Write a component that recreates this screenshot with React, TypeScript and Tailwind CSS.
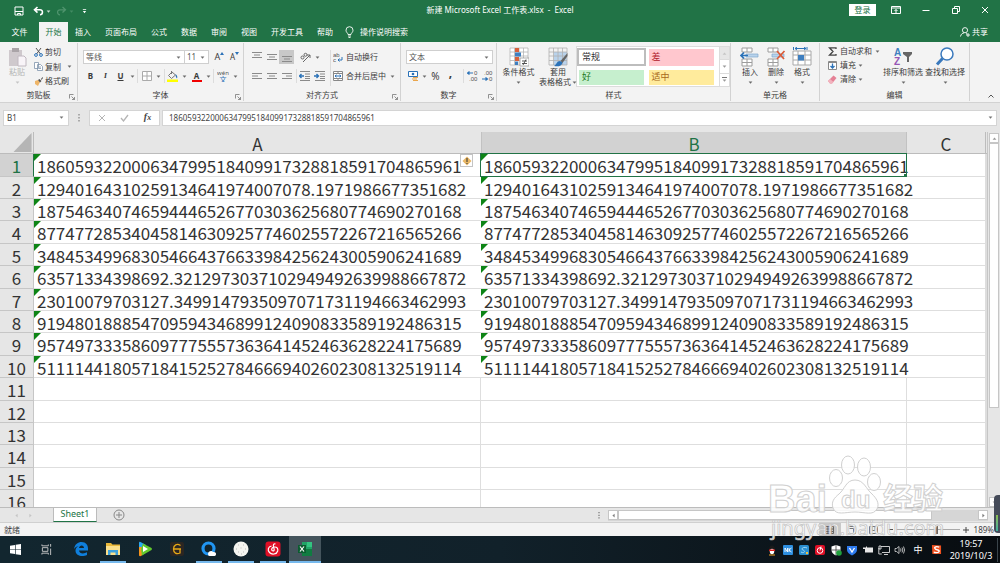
import React from "react";

type Kids = { children?: React.ReactNode };

const Caret = ({ className = "" }: { className?: string }) => (
  <svg viewBox="0 0 6 4" className={`h-[3px] w-[5px] shrink-0 opacity-75 ${className}`}>
    <path d="M0.5 0.5h5L3 3.5z" fill="currentColor" />
  </svg>
);

const Launcher = () => (
  <svg viewBox="0 0 6 6" className="h-[6px] w-[6px]" fill="none" stroke="#777" strokeWidth="0.8">
    <path d="M0.5 4.5v-4h4M2.5 2.5l3 3M5.5 3v2.5H3" />
  </svg>
);

function Group({ label, width, launcher, children }: Kids & { label: string; width: string; launcher?: boolean }) {
  return (
    <section className={`my-px flex shrink-0 flex-col border-r border-[#d2d2d2] ${width}`}>
      <div className="h-[47px] pt-px">{children}</div>
      <div className="flex h-[12px] items-center">
        <span className="w-2" />
        <span className="flex-1 text-center">{label}</span>
        <span className="flex w-2 justify-start pt-1">{launcher && <Launcher />}</span>
      </div>
    </section>
  );
}

const Rule = ({ className = "h-[14px]" }: { className?: string }) => (
  <span className={`w-px shrink-0 bg-[#dcdcdc] ${className}`} />
);

function Tool({ label, width = "w-[15px]", className = "", children }: Kids & { label: string; width?: string; className?: string }) {
  return (
    <button aria-label={label} className={`flex h-[14px] shrink-0 items-center justify-center ${width} ${className}`}>
      {children}
    </button>
  );
}

function Combo({ label, value, width }: { label: string; value: string; width: string }) {
  return (
    <div className={`flex h-[14px] items-center border border-[#cfcfcf] bg-white pr-[3px] ${width}`}>
      <select aria-label={label} className="min-w-0 flex-1 appearance-none bg-transparent pl-[2px] leading-3 text-[#555] outline-none">
        <option>{value}</option>
      </select>
      <Caret />
    </div>
  );
}

function BigButton({ lines, width, caretInline, muted, children }: Kids & { lines: string[]; width: string; caretInline?: boolean; muted?: boolean }) {
  return (
    <button className={`flex shrink-0 flex-col items-center pt-[2px] ${width} ${muted ? "text-[#b5b5b5]" : ""}`}>
      <span className="flex h-[21px] items-center">{children}</span>
      {lines.map((l, i) => (
        <span key={l} className="flex h-[10px] items-center gap-px leading-[10px]">
          {l}
          {caretInline && i === lines.length - 1 && <Caret />}
        </span>
      ))}
      {!caretInline && <span className="flex h-[10px] items-center"><Caret /></span>}
    </button>
  );
}

const Lines = ({ y, x = [1, 1, 1], w = [10, 10, 10] }: { y: number; x?: number[]; w?: number[] }) => (
  <svg viewBox="0 0 12 12" className="h-3 w-3" stroke="#8a8a8a" strokeWidth="1">
    {x.map((s, i) => (
      <path key={i} d={`M${s} ${y + i * 2.5}h${w[i]}`} />
    ))}
  </svg>
);

const Indent = ({ right }: { right?: boolean }) => (
  <svg viewBox="0 0 12 12" className="h-3 w-3" fill="none">
    <path d="M1 1.5h10M6 4h5M6 6.500h5M1 10.500h10M6 8.500h5" stroke="#8a8a8a" />
    <path d={right ? "M0 6h4M2.500 4l2 2-2 2" : "M5 6H1M2.500 4l-2 2 2 2"} stroke="#2b72b8" strokeWidth="1.400" />
  </svg>
);

const Decimals = ({ dec }: { dec?: boolean }) => (
  <svg viewBox="0 0 12 12" className="h-3 w-3" fontFamily="Liberation Sans, sans-serif" fontSize="6" fill="#555">
    <text x={dec ? 2 : 7} y="5">{dec ? ".00" : "0"}</text>
    <text x={dec ? 7 : 2} y="11">{dec ? "0" : ".00"}</text>
    <path d={dec ? "M0 9h5M3.500 7.500L5.500 9l-2 1.500" : "M6 3H1M2.500 1.500L.5 3l2 1.500"} stroke="#2b72b8" fill="none" strokeWidth="1.200" />
  </svg>
);

const gridPath = "M1 1h18v17H1zM1 5h18M1 9h18M1 13.500h18M5.500 1v17M10 1v17M14.500 1v17";

const CondIcon = () => (
  <svg viewBox="0 0 20 20" className="h-5 w-5" fill="none">
    <path d={gridPath} fill="#fff" stroke="#b5b5b5" strokeWidth="0.800" />
    <path d="M6 1h4v4H6zM6 10h4v4H6z" fill="#d8603b" />
    <path d="M6 5.500h6v4H6zM6 14.500h3V18H6z" fill="#3f7fc0" />
    <path d="M11 11h9v8h-9z" fill="#fff" stroke="#999" strokeWidth="0.800" />
    <path d="M13 14h5M13 16.500h5M17 12.500l-3 5.500" stroke="#444" strokeWidth="0.900" />
  </svg>
);
const TableIcon = () => (
  <svg viewBox="0 0 20 20" className="h-5 w-5" fill="none">
    <path d="M6 5h13v13H6z" fill="#b9d3ec" />
    <path d={gridPath} stroke="#b0b0b0" strokeWidth="0.800" />
    <path d="M19.500 6l-7 8 2 2 5-7z" fill="#666" />
    <path d="M12 14c-3 0-3 3-6 5 4 1 8 0 8.500-3.500z" fill="#2b72b8" />
  </svg>
);
const CellsIcon = ({ kind }: { kind: "in" | "del" | "fmt" }) => (
  <svg viewBox="0 0 20 20" className="h-5 w-5" fill="none">
    {kind === "fmt" ? (
      <>
        <path d="M1 4h18v14H1zM1 8h18M1 13h18M6 4v14M13 4v14" fill="#fff" stroke="#a8a8a8" />
        <path d="M6 8h6v5.500H6z" fill="#3f7fc0" />
        <path d="M1.500 0v3M15 0v3M3 1.500h11M5 0L3 1.500 5 3M12 0l2 1.500L12 3" stroke="#2b72b8" />
      </>
    ) : (
      <>
        <path d="M2 1h10v4H2zM7 1v4M2 12h10v7H2zM2 15.500h10M7 12v7" fill="#fff" stroke="#9c9c9c" />
        <path d="M6 7h12v3H6z" fill="#b9d3ec" stroke="#7ea6cc" strokeWidth="0.700" />
        {kind === "in" ? (
          <path d="M8 8.500H1M4 5.500l-3 3 3 3" stroke="#2b72b8" strokeWidth="1.700" />
        ) : (
          <path d="M11 4l7 8M18.500 4L11 12" stroke="#dc5a36" strokeWidth="1.700" />
        )}
      </>
    )}
  </svg>
);

const tabs = ["插入", "页面布局", "公式", "数据", "审阅", "视图", "开发工具", "帮助"];

function TitleBar() {
  return (
    <header className="shrink-0 bg-[#217346] text-white">
      <div className="grid h-[22px] grid-cols-[1fr_auto_1fr] items-center">
        <div className="flex items-center pl-[14px]">
          <Tool label="保存" width="w-[10px]">
            <svg viewBox="0 0 10 10" className="h-[10px] w-[10px]" fill="none" stroke="#fff">
              <path d="M1 1h8v8H1zM1 5.500h8M3.500 9V7.500h3V9" />
            </svg>
          </Tool>
          <Tool label="撤消" width="ml-[9px] w-[18px]" className="gap-[2px]">
            <svg viewBox="0 0 11 10" className="h-[10px] w-[11px]" fill="none" stroke="#fff" strokeWidth="1.600">
              <path d="M4.500 1L1.500 3.800l3 2.800M1.500 3.800H7c3.500 0 3 5 0 5" />
            </svg>
            <Caret />
          </Tool>
          <Tool label="恢复" width="ml-[5px] w-[18px]" className="gap-[2px] text-[#4f946d]">
            <svg viewBox="0 0 11 10" className="h-[10px] w-[11px]" fill="none" stroke="currentColor" strokeWidth="1.300">
              <path d="M6.500 1l3 2.800-3 2.800M9.500 3.800H4c-3.500 0-3 5 0 5" />
            </svg>
            <Caret />
          </Tool>
          <Tool label="自定义快速访问工具栏" width="ml-[5px] w-[10px]">
            <svg viewBox="0 0 6 6" className="h-[5px] w-[5px]" fill="#fff"><path d="M1 0h4v1H1zM1 2.500h4L3 5z" /></svg>
          </Tool>
        </div>
        <h1 className="pb-[2px]">新建 Microsoft Excel 工作表.xlsx&nbsp; -&nbsp; Excel</h1>
        <div className="flex items-center justify-end pb-[2px]">
          <button className="h-3 w-[27px] bg-white leading-3 text-[#217346]">登录</button>
          <Tool label="功能区显示选项" width="ml-[11px] w-[18px]">
            <svg viewBox="0 0 10 8" className="h-2 w-[10px]" fill="none" stroke="#fff"><path d="M.5.5h9v7h-9zM.5 2h9M5 7V3.500M3.500 5L5 3.500 6.500 5" /></svg>
          </Tool>
          <Tool label="最小化" width="ml-[12px] w-[18px]">
            <svg viewBox="0 0 8 8" className="h-2 w-2" stroke="#fff"><path d="M.5 4.500h7" /></svg>
          </Tool>
          <Tool label="还原" width="ml-[12px] w-[18px]">
            <svg viewBox="0 0 8 8" className="h-2 w-2" fill="none" stroke="#fff"><path d="M.5 2.500h5v5h-5zM2.500 2V.5h5v5H6" /></svg>
          </Tool>
          <Tool label="关闭" width="mr-[6px] ml-[11px] w-[18px]">
            <svg viewBox="0 0 8 8" className="h-2 w-2" fill="none" stroke="#fff"><path d="M1 1l6 6M7 1L1 7" /></svg>
          </Tool>
        </div>
      </div>
      <nav className="flex h-5 items-stretch">
        <button className="w-[39px]">文件</button>
        <button className="w-[29px] bg-[#f3f3f3] text-[#217346]">开始</button>
        {tabs.map((t) => (
          <button key={t} className="px-[7px]">{t}</button>
        ))}
        <button className="flex items-center gap-[6px] pl-[5px]">
          <svg viewBox="0 0 9 12" className="h-3 w-[9px]" fill="none" stroke="#fff" strokeWidth="0.900">
            <path d="M3 8.500C3 7 1 6.500 1 4.200a3.500 3.500 0 017 0C8 6.500 6 7 6 8.500zM3 10h3M3.500 11.500h2" />
          </svg>
          操作说明搜索
        </button>
        <button className="mr-3 ml-auto flex items-center gap-[2px]">
          <svg viewBox="0 0 10 10" className="h-[10px] w-[10px]" fill="none" stroke="#fff" strokeWidth="0.900">
            <circle cx="5" cy="3.200" r="2.600" /><path d="M.5 9.500C1 7 2.500 6 4 6M6 6.500l1 .5M8 6v4M6 8h4" />
          </svg>
          共享
        </button>
      </nav>
    </header>
  );
}

function Ribbon() {
  return (
    <div className="flex h-[61px] shrink-0 overflow-hidden border-b border-[#d2d2d2] bg-[#f3f3f3] text-[#3b3b3b]">
      <Group label="剪贴板" width="w-[78px]" launcher>
        <div className="flex h-full">
          <BigButton lines={["粘贴"]} width="w-[34px]" muted>
            <svg viewBox="0 0 20 20" className="h-5 w-5">
              <path d="M2 3h13v16H2z" fill="#cfc9cd" /><path d="M5 1h7v4H5z" fill="#aaa4a8" />
              <path d="M11 9h6l2 2v8h-8z" fill="#f8f4f8" stroke="#c0b8c0" />
            </svg>
          </BigButton>
          <div className="flex flex-col pt-px">
            <button className="flex h-[14px] items-center gap-[2px]">
              <svg viewBox="0 0 9 9" className="h-[9px] w-[9px]" fill="none">
                <path d="M2 0l4.500 6M7 0L2.500 6" stroke="#555" /><circle cx="2" cy="7" r="1.400" stroke="#2b72b8" /><circle cx="7" cy="7" r="1.400" stroke="#2b72b8" />
              </svg>
              剪切
            </button>
            <button className="flex h-[15px] items-center gap-[2px]">
              <svg viewBox="0 0 9 9" className="h-[9px] w-[9px]" fill="#fff" stroke="#7d93ab" strokeWidth="0.800">
                <path d="M.5.5h4v6h-4zM3.500 2.500h3l2 2v4h-5zM5 5h2M5 6.500h2" />
              </svg>
              复制
              <Caret className="ml-1" />
            </button>
            <button className="flex h-[14px] items-center gap-[2px]">
              <svg viewBox="0 0 9 9" className="h-[9px] w-[9px]">
                <path d="M1 4l3-1 2 2-2 4-3-2z" fill="#eeb568" /><path d="M4 3l1.500-1 2 2L6 5.500zM7 2l1.500-2L9 1 7.500 3z" fill="#555" />
              </svg>
              格式刷
            </button>
          </div>
        </div>
      </Group>

      <Group label="字体" width="w-[166px]" launcher>
        <div className="flex flex-col gap-[5px] pt-[6px] pl-[5px]">
          <div className="flex">
            <Combo label="字体" value="等线" width="w-[102px]" />
            <Combo label="字号" value="11" width="-ml-px w-[25px]" />
            <Tool label="增大字号" width="ml-[3px] w-[15px]" className="text-[9px]">A<svg viewBox="0 0 4 3" className="mb-2 h-[3px] w-1" fill="#2b72b8"><path d="M2 0l2 3H0z" /></svg></Tool>
            <Tool label="减小字号" className="text-[8px]">A<svg viewBox="0 0 4 3" className="mb-2 h-[3px] w-1" fill="#2b72b8"><path d="M2 3l2-3H0z" /></svg></Tool>
          </div>
          <div className="flex items-center">
            <Tool label="加粗"><b>B</b></Tool>
            <Tool label="倾斜"><i className="font-serif font-bold">I</i></Tool>
            <Tool label="下划线"><u className="font-bold">U</u></Tool>
            <Tool label="下划线选项" width="w-[9px]"><Caret /></Tool>
            <Rule />
            <Tool label="边框" width="w-[26px]" className="gap-1">
              <svg viewBox="0 0 10 10" className="h-[10px] w-[10px]" fill="#fff" stroke="#aaa"><path d="M.5.5h9v9h-9zM5 0v10M0 5h10" /></svg>
              <Caret />
            </Tool>
            <Rule />
            <Tool label="填充颜色" width="w-[24px]" className="gap-1">
              <svg viewBox="0 0 11 11" className="h-[11px] w-[11px]" fill="none">
                <path d="M5 1L1.500 4.500 4.500 7.500l4-3.500zM4.500 0v3" stroke="#777" /><path d="M8.500 3c2 1.500 2 3 1.500 4.500-1-1-1.500-2-1.500-4.500z" fill="#2b72b8" /><path d="M0 8.500h11V11H0z" fill="#ff0" />
              </svg>
              <Caret />
            </Tool>
            <Tool label="字体颜色" width="w-[24px]" className="gap-1">
              <span className="w-[10px] border-b-2 border-[#f00000] text-center leading-[9px] font-bold">A</span>
              <Caret />
            </Tool>
            <Rule />
            <Tool label="拼音" width="w-[26px]" className="gap-1">
              <svg viewBox="0 0 12 12" className="h-3 w-3" textAnchor="middle">
                <text x="6" y="4.500" fontSize="6" fill="#555">wén</text>
                <text x="6" y="11.500" fontSize="7" fill="#2b72b8">文</text>
              </svg>
              <Caret />
            </Tool>
          </div>
        </div>
      </Group>

      <Group label="对齐方式" width="w-[157px]" launcher>
        <div className="flex pt-[6px] pl-[5px]">
          <div className="flex flex-col gap-[5px]">
            <div className="flex items-center">
              <Tool label="顶端对齐"><Lines y={1.500} x={[1, 3, 1]} w={[10, 6, 10]} /></Tool>
              <Tool label="垂直居中"><Lines y={3.500} x={[1, 3, 1]} w={[10, 6, 10]} /></Tool>
              <Tool label="底端对齐" className="bg-[#c8c8c8]"><Lines y={5.500} x={[1, 3, 1]} w={[10, 6, 10]} /></Tool>
              <Tool label="方向" width="ml-1 w-[24px]" className="gap-1">
                <svg viewBox="0 0 11 11" className="h-[11px] w-[11px]" fill="none" stroke="#666"><path d="M3 10l7-7M7 3h3v3" /><circle cx="2.500" cy="5.500" r="1.500" /><circle cx="5.500" cy="2.800" r="1.500" /></svg>
                <Caret />
              </Tool>
            </div>
            <div className="flex items-center">
              <Tool label="左对齐"><Lines y={3.500} w={[10, 6, 10]} /></Tool>
              <Tool label="居中"><Lines y={3.500} x={[1, 3, 1]} w={[10, 6, 10]} /></Tool>
              <Tool label="右对齐"><Lines y={3.500} x={[1, 5, 1]} w={[10, 6, 10]} /></Tool>
              <Rule className="ml-[2px] h-[14px]" />
              <Tool label="减少缩进量"><Indent /></Tool>
              <Tool label="增加缩进量"><Indent right /></Tool>
            </div>
          </div>
          <Rule className="mr-[2px] ml-[3px] h-[36px]" />
          <div className="flex flex-col gap-[5px]">
            <button className="flex h-[14px] items-center gap-[3px]">
              <svg viewBox="0 0 10 10" className="h-[10px] w-[10px]" fill="#555" fontSize="6" fontFamily="Liberation Sans, sans-serif"><text x="0" y="4.500">ab</text><text x="0" y="9.500">c</text><path d="M9 5v3H5M6.500 6.500L5 8l1.500 1.500" fill="none" stroke="#2b72b8" /></svg>
              自动换行
            </button>
            <button className="flex h-[14px] items-center gap-[3px]">
              <svg viewBox="0 0 10 10" className="h-[10px] w-[10px]" fill="#fff" stroke="#888"><path d="M.5.5h9v9h-9zM.5 2.500h9M.5 7.500h9M5 .5v2M5 7.500v2" /><path d="M2 5h6M3.500 3.800L2 5l1.500 1.200M6.500 3.800L8 5 6.500 6.200" stroke="#2b72b8" fill="none" /></svg>
              合并后居中
              <Caret className="ml-px" />
            </button>
          </div>
        </div>
      </Group>

      <Group label="数字" width="w-[96px]" launcher>
        <div className="flex flex-col gap-[5px] pt-[6px] pl-[5px]">
          <Combo label="数字格式" value="文本" width="w-[87px]" />
          <div className="flex items-center">
            <Tool label="会计数字格式" width="w-[22px]" className="gap-[3px]">
              <svg viewBox="0 0 11 10" className="h-[10px] w-[11px]"><path d="M.5.5h9v5h-9z" fill="#fff" stroke="#2b72b8" /><circle cx="5" cy="3" r="1.300" fill="#2b72b8" /><path d="M5 6h5v1H5zM4 7.500h5v1H4zM5 9h5v1H5z" fill="#eaa64d" /></svg>
              <Caret />
            </Tool>
            <Tool label="百分比样式" className="text-[10px]">%</Tool>
            <Tool label="千位分隔样式" className="text-[12px] font-bold"><span className="mb-[6px]">,</span></Tool>
            <Rule className="mr-px ml-[5px] h-[14px]" />
            <Tool label="增加小数位数"><Decimals /></Tool>
            <Tool label="减少小数位数"><Decimals dec /></Tool>
          </div>
        </div>
      </Group>

      <Group label="样式" width="w-[234px]">
        <div className="flex h-full">
          <BigButton lines={["条件格式"]} width="w-[43px]"><CondIcon /></BigButton>
          <BigButton lines={["套用", "表格格式"]} width="w-[36px]" caretInline><TableIcon /></BigButton>
          <div className="mt-[2px] flex h-[41px] border border-[#dcdcdc] bg-white text-[9px]">
            <div className="grid grid-cols-2 gap-x-[3px] gap-y-[3px] py-px pr-[2px]">
              <button className="h-[18px] w-[69px] border-2 border-[#bdbdbd] pl-[3px] text-left text-[#333]">常规</button>
              <button className="my-px w-[65px] bg-[#ffc7ce] pl-[3px] text-left text-[#b0202c]">差</button>
              <button className="mx-[2px] h-[15px] bg-[#c6efce] pl-[3px] text-left text-[#1d7a1d]">好</button>
              <button className="h-[15px] w-[65px] bg-[#ffeb9c] pl-[3px] text-left text-[#a8691a]">适中</button>
            </div>
            <div className="flex w-[10px] flex-col divide-y divide-[#dcdcdc] border-l border-[#dcdcdc] text-[#777]">
              <button aria-label="上一行" className="flex flex-1 items-center justify-center bg-[#e6e6e6]"><Caret className="rotate-180 text-[#bbb]" /></button>
              <button aria-label="下一行" className="flex flex-1 items-center justify-center"><Caret /></button>
              <button aria-label="其他" className="flex flex-1 flex-col items-center justify-center gap-px"><span className="h-px w-[5px] bg-[#777]" /><Caret /></button>
            </div>
          </div>
        </div>
      </Group>

      <Group label="单元格" width="w-[89px]">
        <div className="flex h-full pl-[6px]">
          <BigButton lines={["插入"]} width="w-[26px]"><CellsIcon kind="in" /></BigButton>
          <BigButton lines={["删除"]} width="w-[26px]"><CellsIcon kind="del" /></BigButton>
          <BigButton lines={["格式"]} width="w-[26px]"><CellsIcon kind="fmt" /></BigButton>
        </div>
      </Group>

      <Group label="编辑" width="w-[150px]">
        <div className="flex h-full pl-2">
          <div className="flex w-[54px] flex-col">
            <button className="flex h-[14px] items-center gap-[3px]">
              <svg viewBox="0 0 9 9" className="h-[9px] w-[9px] shrink-0" fill="none" stroke="#444" strokeWidth="1.300"><path d="M8 2V.8H1.500L5 4.500 1.500 8.200H8V7" /></svg>
              自动求和
              <Caret />
            </button>
            <button className="flex h-[14px] items-center gap-[3px]">
              <svg viewBox="0 0 9 9" className="h-[9px] w-[9px]" fill="#fff" stroke="#888"><path d="M.5.5h8v8h-8zM.5 1.500h8" /><path d="M4.500 2.500V7M2.500 5l2 2 2-2" fill="none" stroke="#2b72b8" strokeWidth="1.300" /></svg>
              <span className="flex items-center gap-[2px]">填充<Caret /></span>
            </button>
            <button className="flex h-[14px] items-center gap-[3px]">
              <svg viewBox="0 0 9 9" className="h-[9px] w-[9px]"><path d="M0 6l5.500-5.500 3 2.500L4 8.500H2z" fill="#e58196" /><path d="M0 6l2-2 3.500 3L4 8.500H2z" fill="#f2b3be" /></svg>
              <span className="flex items-center gap-[2px]">清除<Caret /></span>
            </button>
          </div>
          <BigButton lines={["排序和筛选"]} width="w-[42px]">
            <svg viewBox="0 0 20 20" className="h-5 w-5" fontFamily="Liberation Sans, sans-serif" fontSize="10" fontWeight="bold">
              <text x="1" y="9" fill="#3f7fc0">A</text><text x="1" y="18" fill="#9655b5">Z</text>
              <path d="M10 5h9v2l-3 3v5h-2v-5l-4-3z" fill="#666" />
            </svg>
          </BigButton>
          <BigButton lines={["查找和选择"]} width="w-[42px]">
            <svg viewBox="0 0 20 20" className="h-5 w-5" fill="none" stroke="#3a79bd"><circle cx="12" cy="7" r="6" fill="#fff" strokeWidth="1.500" /><path d="M7.500 11.500L2 17.500" strokeWidth="3" /></svg>
          </BigButton>
        </div>
      </Group>
      <button aria-label="折叠功能区" className="mt-auto mr-[6px] mb-1 ml-auto">
        <svg viewBox="0 0 6 4" className="h-1 w-[6px]" fill="none" stroke="#555"><path d="M.5 3.500L3 1l2.500 2.500" /></svg>
      </button>
    </div>
  );
}

function FormulaBar() {
  return (
    <div className="flex h-[29px] shrink-0 items-center bg-[#e6e6e6] pr-[3px] text-[#444]">
      <div className="ml-[3px] flex h-4 w-[66px] items-center border border-[#d4d4d4] bg-white pr-1">
        <input aria-label="名称框" defaultValue="B1" className="min-w-0 flex-1 bg-transparent pl-[3px] outline-none" />
        <Caret />
      </div>
      <svg viewBox="0 0 2 8" className="mx-[9px] h-2 w-[2px] fill-[#aaa]"><path d="M0 0h2v1.500H0zM0 3h2v1.500H0zM0 6h2v1.500H0z" /></svg>
      <div className="flex h-4 w-[71px] items-center justify-around border border-[#d4d4d4] bg-white">
        <Tool label="取消"><svg viewBox="0 0 8 8" className="h-2 w-2" stroke="#b5b5b5"><path d="M1 1l6 6M7 1L1 7" /></svg></Tool>
        <Tool label="输入"><svg viewBox="0 0 9 8" className="h-2 w-[9px]" fill="none" stroke="#b5b5b5" strokeWidth="1.300"><path d="M1 4l2.500 3L8 1" /></svg></Tool>
        <Tool label="插入函数"><i className="font-['Liberation_Serif',serif] text-[10px] font-bold">f<span className="text-[8px]">x</span></i></Tool>
      </div>
      <div className="ml-[2px] flex h-4 flex-1 items-center border border-[#d4d4d4] bg-white pr-[3px]">
        <input aria-label="编辑栏" defaultValue={values[0]} className="min-w-0 flex-1 bg-transparent pl-[6px] outline-none" />
        <Caret />
      </div>
    </div>
  );
}

const values = [
  "186059322000634799518409917328818591704865961",
  "12940164310259134641974007078.1971986677351682",
  "187546340746594446526770303625680774690270168",
  "877477285340458146309257746025572267216565266",
  "348453499683054664376633984256243005906241689",
  "63571334398692.3212973037102949492639988667872",
  "23010079703127.3499147935097071731194663462993",
  "919480188854709594346899124090833589192486315",
  "957497333586097775557363641452463628224175689",
  "511114418057184152527846669402602308132519114",
];
const rowHeights = ["h-[23px]", "h-[22px]", "h-[22px]", "h-[23px]", "h-[22px]"];

function Cell({ value, selected, warn }: { value?: string; selected?: boolean; warn?: boolean }) {
  return (
    <td className={`relative border-b border-[#dedede] p-0 pt-[2px] pl-[3px] ${value ? "" : "border-r"}`}>
      {value && (
        <svg viewBox="0 0 7 7" className="absolute top-0 left-0 h-[7px] w-[7px]"><path d="M0 0h7L0 7z" fill="#0d8415" /></svg>
      )}
      {value}
      {selected && (
        <span className="pointer-events-none absolute -top-px right-0 -bottom-px -left-px border border-[#217346]">
          <span className="absolute -right-px -bottom-px h-[3px] w-[3px] bg-[#217346]" />
        </span>
      )}
      {warn && (
        <button aria-label="错误检查选项" className="absolute top-0 right-2 flex h-[13px] w-[13px] items-center justify-center border border-[#c4c4c4] bg-white">
          <svg viewBox="0 0 10 10" className="h-[10px] w-[10px]"><path d="M5 .5L9.500 5 5 9.500.5 5z" fill="#e9b765" /><path d="M4.500 2h1v4h-1zM4.500 7h1v1h-1z" fill="#333" /></svg>
        </button>
      )}
    </td>
  );
}

function Sheet() {
  return (
    <div className="flex min-h-0 flex-1 bg-[#e6e6e6]">
      <div className="min-w-0 flex-1 overflow-hidden bg-white">
        <table className="w-full table-fixed border-separate border-spacing-0 font-['Noto_Sans_CJK_SC',sans-serif] text-[17px] leading-[18px] font-normal text-[#333]">
          <colgroup>
            <col className="w-[34px]" /><col className="w-[447px]" /><col className="w-[426px]" /><col className="w-[79px]" /><col />
          </colgroup>
          <thead>
            <tr className="h-[22px] bg-[#e6e6e6]">
              <td className="border-r border-b border-[#bcbcbc] p-0">
                <svg viewBox="0 0 20 20" className="ml-auto h-[19px] w-5"><path d="M19 0v20H0z" fill="#b5b5b5" /></svg>
              </td>
              <th className="border-b border-[#bcbcbc] p-0 pt-[2px] font-normal">A</th>
              <th className="border-x border-b border-[#c2c2c2] border-b-[#217346] bg-[#d2d2d2] p-0 pt-[2px] font-normal text-[#217346]">B</th>
              <th className="border-r border-b border-[#bcbcbc] p-0 pt-[2px] font-normal">C</th>
              <th className="border-b border-[#bcbcbc] p-0"></th>
            </tr>
          </thead>
          <tbody>
            {Array.from({ length: 16 }, (_, i) => (
              <tr key={i} className={rowHeights[i % 5]}>
                <th className={`border-r border-b border-[#c6c6c6] p-0 pt-[2px] font-normal ${i === 0 ? "border-r-[#217346] bg-[#d2d2d2] text-[#217346]" : "bg-[#e6e6e6]"}`}>{i + 1}</th>
                <Cell value={values[i]} warn={i === 0} />
                <Cell value={values[i]} selected={i === 0} />
                <Cell />
                <Cell />
              </tr>
            ))}
          </tbody>
        </table>
      </div>
      <div className="flex w-[13px] shrink-0 flex-col items-center border-l border-[#c6c6c6] pt-[1px]">
        <button aria-label="向上滚动" className="flex h-[10px] w-[10px] items-center justify-center border border-[#c6c6c6] bg-white"><Caret className="rotate-180 text-[#777]" /></button>
        <div className="h-[265px] w-[10px] border border-[#c6c6c6] bg-white" />
        <button aria-label="向下滚动" className="mt-auto flex h-[10px] w-[10px] items-center justify-center border border-[#c6c6c6] bg-white"><Caret className="text-[#777]" /></button>
      </div>
    </div>
  );
}

function SheetTabs() {
  return (
    <div className="flex h-[15px] shrink-0 items-center border-t border-[#bcbcbc] bg-[#e6e6e6] text-[#bbb]">
      <button aria-label="上一张工作表" className="ml-[14px] w-[14px]"><Caret className="rotate-90" /></button>
      <button aria-label="下一张工作表" className="w-[25px]"><Caret className="-rotate-90" /></button>
      <button className="-mt-px h-[14px] w-[44px] border-x border-b border-x-[#bcbcbc] border-b-[#217346] bg-white text-[9px] leading-[12px] text-[#217346]">Sheet1</button>
      <button aria-label="新工作表" className="ml-4">
        <svg viewBox="0 0 12 12" className="h-3 w-3" fill="none" stroke="#888"><circle cx="6" cy="6" r="5" /><path d="M6 3v6M3 6h6" /></svg>
      </button>
      <svg viewBox="0 0 2 8" className="mr-2 ml-auto h-[7px] w-[2px] fill-[#999]"><path d="M0 0h2v1.500H0zM0 3h2v1.500H0zM0 6h2v1.500H0z" /></svg>
      <div className="mr-3 flex h-[11px] w-[380px] items-center bg-[#d6d6d6]">
        <button aria-label="向左滚动" className="flex h-[10px] w-[10px] items-center justify-center border border-[#c6c6c6] bg-white"><Caret className="rotate-90 text-[#555]" /></button>
        <div className="h-[10px] w-[314px] border border-[#c6c6c6] bg-white" />
        <button aria-label="向右滚动" className="ml-auto flex h-[10px] w-[10px] items-center justify-center border border-[#c6c6c6] bg-white"><Caret className="-rotate-90 text-[#555]" /></button>
      </div>
    </div>
  );
}

function StatusBar() {
  return (
    <div className="flex h-[14px] shrink-0 items-center border-t border-[#d0d0d0] bg-[#f3f3f3] pr-[6px] pl-1 text-[#444]">
      <span>就绪</span>
      <div className="ml-auto flex items-center">
        <Tool label="普通" width="w-[22px]" className="bg-[#c8c8c8]"><svg viewBox="0 0 9 8" className="h-2 w-[9px]" fill="none" stroke="#666"><path d="M.5.5h8v7h-8zM.5 3h8M.5 5.500h8M3 .5v7M6 .5v7" /></svg></Tool>
        <Tool label="页面布局" width="w-[22px]"><svg viewBox="0 0 9 8" className="h-2 w-[9px]" fill="none" stroke="#777"><path d="M.5.5h8v7h-8zM2.500 2.500h4v5" /></svg></Tool>
        <Tool label="分页预览" width="w-[22px]"><svg viewBox="0 0 9 8" className="h-2 w-[9px]" fill="none" stroke="#777"><path d="M.5.5h8v7h-8zM3 .5v4h3v-4" /></svg></Tool>
        <Tool label="缩小" width="w-[11px]"><span className="h-px w-[5px] bg-[#555]" /></Tool>
        <input aria-label="显示比例" type="range" min={10} max={400} defaultValue={265} className="h-[10px] w-[64px] appearance-none bg-[linear-gradient(#aaa,#aaa)] bg-[length:100%_1px] bg-center bg-no-repeat [&::-webkit-slider-thumb]:h-2 [&::-webkit-slider-thumb]:w-[3px] [&::-webkit-slider-thumb]:appearance-none [&::-webkit-slider-thumb]:bg-[#666]" />
        <Tool label="放大" width="w-[12px]"><svg viewBox="0 0 6 6" className="h-[6px] w-[6px]" stroke="#444"><path d="M0 3h6M3 0v6" /></svg></Tool>
        <span className="pl-[2px]">189%</span>
      </div>
    </div>
  );
}

const apps: { name: string; open?: boolean; active?: boolean; art: React.ReactNode }[] = [
  { name: "Edge", art: <path d="M1 8C2 3 5 1 8.500 1 13 1 15 4 15 7.500V9.500H6c.3 3.500 5 3.500 8 1.800V14C10 16 2.500 15.500 2.500 9.500 2.500 7.500 4 5.800 5.500 5 3.500 5.300 2 6.500 1 8zm5-1h5c0-3.500-4.500-3.500-5 0z" fill="#0f7fdc" /> },
  { name: "文件资源管理器", open: true, art: <><path d="M1 2h5l1.500 1.500H15V14H1z" fill="#e9b83a" /><path d="M1 5h14v9H1z" fill="#fbe08b" /><path d="M3 9h10v5h-2.500v-2.500h-5V14H3z" fill="#3ba0dc" /></> },
  { name: "腾讯视频", art: <><path d="M2 1.500Q2 .5 3.500 1L9 4 5 8 2 10z" fill="#2aa8f0" /><path d="M2 6v8.500q.5 1 2 .5l5-3.500L6 6z" fill="#f7941d" /><path d="M6 2.500l8.500 4.500q1 1 0 2L5 14.500 4 8z" fill="#63c92e" /><path d="M6 5l5 3-5 3z" fill="#fff" /></> },
  { name: "GeForce", art: <><rect x="1" y="1" width="14" height="14" rx="2" fill="#2c2622" /><path d="M11.500 4.500C8 2 4.500 4 4.500 8s3 5.500 6.500 4V8H8M5 8h7" fill="none" stroke="#e6a817" strokeWidth="1.300" /></> },
  { name: "QQ浏览器", open: true, art: <><circle cx="7.500" cy="7.500" r="5.500" fill="none" stroke="#2196f3" strokeWidth="3.200" /><path d="M7 13c0-3 4-4 5-2 2-.5 3.500 1 3 2.500-.3 1-1 1.500-2 1.500H8.500Q7 15 7 13z" fill="#fff" /></> },
  { name: "随机数", open: true, art: <><circle cx="8" cy="8" r="7.500" fill="#f5f5f0" /><path d="M5 4h1M10 4h1M3 8h1M7.500 7h1M12 8h1M5 11h1M10 11h1M8 13h1" stroke="#bbb" /></> },
  { name: "网易云音乐", open: true, art: <><rect x=".5" y=".5" width="15" height="15" rx="3" fill="#e00f26" /><path d="M10.500 3C8.500 2.500 8 4 8.500 5.500l.7 3c.3 1.800-2.500 2-2.500 0 0-1.500 1-2.500 3-2.500 2.500 0 3.500 1.800 3 4-1 3.500-6 4-8.200 1.500S3 5.800 6.500 5" fill="none" stroke="#fff" strokeWidth="1.200" /></> },
  { name: "Excel", open: true, active: true, art: <><path d="M5 1h10v14H5z" fill="#21a366" /><path d="M5 8h10v7H5z" fill="#107c41" /><path d="M10 1h5v5h-5z" fill="#33c481" /><path d="M1 4h8v8H1z" fill="#0b5c30" /><path d="M3 5.500l4 5M7 5.500l-4 5" stroke="#fff" strokeWidth="1.200" /></> },
];

const tray: { name: string; art: React.ReactNode }[] = [
  { name: "QQ", art: <><ellipse cx="6" cy="6" rx="3" ry="4.500" fill="#1a1a1a" /><ellipse cx="6" cy="7.500" rx="2.200" ry="2.800" fill="#fff" /><path d="M3 5.500h6v1.500H3z" fill="#e02020" /><path d="M3 10.500h6v1H3z" fill="#f0a020" /></> },
  { name: "NK", art: <><rect x="1" y="1" width="10" height="10" rx="1" fill="#2d8fe0" /><path d="M3 8V4l2.500 4V4M7 4v4M9.500 4L7 6l2.500 2" fill="none" stroke="#fff" strokeWidth="0.900" /></> },
  { name: "电脑管家", art: <><rect x="1" y="1" width="10" height="10" rx="1.500" fill="#2a8ed0" /><path d="M3 8c3 2 5-1 2-2s1-4 4-2" fill="none" stroke="#9fd8f5" /><path d="M8 8h2v2H8z" fill="#f0c040" /></> },
  { name: "音乐", art: <><rect x="1" y="1" width="10" height="10" rx="2" fill="#e00f26" /><circle cx="6" cy="6.500" r="2.800" fill="none" stroke="#fff" /><path d="M6 6.500L7 2.500" stroke="#fff" /></> },
  { name: "安全中心", art: <><path d="M6 1l4.500 1.500V6C10.500 9 8 10.500 6 11.500 4 10.500 1.500 9 1.500 6V2.500z" fill="#fff" /><path d="M6 1v10M1.500 6h9" stroke="#222" strokeWidth="0.700" /><circle cx="9" cy="9" r="2.800" fill="#1fa03c" /></> },
  { name: "防护", art: <><path d="M1 2h10v4c0 2-2 4-5 5.500C3 10 1 8 1 6z" fill="#2e7cf0" /><path d="M3.500 4l2.500 4 2.500-4" fill="none" stroke="#fff" strokeWidth="1.300" /></> },
  { name: "电池", art: <path d="M1 3.500h3V2.500h1v1h6v5H3V5H1z" fill="#e8e8e8" /> },
  { name: "网络", art: <path d="M3 2.500h8.500v6H4M.8 4v6h3M1 2h2v3H1zM6 10.500h4" fill="none" stroke="#ddd" strokeWidth="0.900" /> },
  { name: "音量", art: <path d="M1 4.500h1.500L5 2.500v7L2.500 7.500H1zM6.500 4.500q1 1.500 0 3M8 3.500q1.700 2.500 0 5M9.500 2.500q2.200 3.500 0 7" fill="none" stroke="#ddd" strokeWidth="0.800" /> },
];

function Taskbar() {
  return (
    <footer className="flex h-[27px] shrink-0 items-stretch bg-gradient-to-r from-[#12262f] via-[#11212a] to-[#080c10] text-white">
      <button aria-label="开始" className="flex w-[31px] items-center justify-center">
        <svg viewBox="0 0 12 12" className="h-[11px] w-[11px]" fill="#fff"><path d="M0 1.800L5.500 1v4.700H0zM6.200.9L12 0v5.700H6.200zM0 6.300h5.500V11L0 10.200zM6.200 6.300H12V12l-5.800-.9z" /></svg>
      </button>
      <button aria-label="任务视图" className="mr-[3px] flex w-[31px] items-center justify-center">
        <svg viewBox="0 0 12 12" className="h-[11px] w-[11px]" fill="none" stroke="#ccc"><path d="M1 .5V2h7V.5M1 11.500V10h7v1.500M1.500 4h6v4h-6zM10.500 0v3M10.500 5v7" /></svg>
      </button>
      {apps.map((a) => (
        <button key={a.name} aria-label={a.name} className={`flex w-8 flex-col items-center ${a.active ? "bg-[#44545c]" : ""}`}>
          <span className="flex flex-1 items-center">
            <svg viewBox="0 0 16 16" className="h-4 w-4">{a.art}</svg>
          </span>
          <span className={`h-[2px] ${a.active ? "w-full" : "w-[26px]"} ${a.open ? "bg-[#76b9ed]" : ""}`} />
        </button>
      ))}
      <div className="ml-auto flex items-center">
        {tray.map((t) => (
          <button key={t.name} aria-label={t.name} className="flex w-4 items-center justify-center">
            <svg viewBox="0 0 12 12" className="h-3 w-3">{t.art}</svg>
          </button>
        ))}
        <button className="w-5 text-[9px]">中</button>
        <button aria-label="搜狗输入法" className="flex w-4 items-center justify-center">
          <svg viewBox="0 0 12 12" className="h-[11px] w-[11px]"><path d="M1 1l10 .5V11L1.500 11z" fill="#f0501e" /><path d="M9 3.500C5 2 2.500 4 5 5.500s5 1 3.500 3-4 .5-5.500.5" fill="none" stroke="#fff" strokeWidth="1.500" /></svg>
        </button>
        <div className="ml-[3px] w-[51px] border-r border-[#3a444a] pr-[2px] text-center text-[9px] leading-[12px]">
          <div>19:57</div>
          <div>2019/10/3</div>
        </div>
        <span className="w-[2px]" />
      </div>
    </footer>
  );
}

const Watermark = () => (
  <svg viewBox="0 0 184 92" className="pointer-events-none absolute right-12 bottom-[18px] h-[92px] w-[184px] overflow-visible" fontFamily="Liberation Sans, Noto Sans CJK SC, sans-serif" fontWeight="bold" stroke="#d0d0d0" strokeWidth="1" fill="#fff" fillOpacity="0.85">
    <text x="0" y="59" fontSize="38">Bai</text>
    <ellipse cx="68" cy="25" rx="6.500" ry="8.500" />
    <ellipse cx="80" cy="12" rx="6.500" ry="9" />
    <ellipse cx="96" cy="14" rx="6.500" ry="9" />
    <ellipse cx="106" cy="29" rx="6.500" ry="8.500" />
    <path d="M87 27c-9 0-10 9-16 14-5 4-8 8-6 14 3 8 12 4 22 4s18 4 22-3c3-6-1-11-5-15-6-5-8-14-17-14z" />
    <text x="73" y="55" fontSize="24">du</text>
    <text x="115" y="56" fontSize="30">经验</text>
    <text x="3" y="82" fontSize="20" fontFamily="Noto Sans, sans-serif" fontWeight="normal" stroke="#c0c0c0" strokeWidth="0.700">jingyan.baidu.com</text>
  </svg>
);

export default function App() {
  return (
    <div className="relative flex h-screen flex-col overflow-hidden font-['Noto_Sans','Noto_Sans_CJK_SC',sans-serif] text-[8px] leading-3 whitespace-nowrap">
      <TitleBar />
      <Ribbon />
      <FormulaBar />
      <Sheet />
      <SheetTabs />
      <StatusBar />
      <Taskbar />
      <Watermark />
      <div className="absolute right-0 bottom-[30px] flex h-[38px] w-[6px] flex-col justify-end rounded-l bg-[#454b59] p-[2px]">
        <span className="h-4 bg-gradient-to-b from-[#8cbc4f] to-[#3cae9c]" />
      </div>
    </div>
  );
}
